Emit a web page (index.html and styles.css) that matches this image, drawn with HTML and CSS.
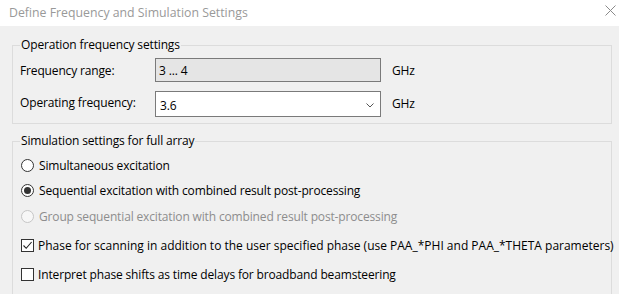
FILE: index.html
```html
<!DOCTYPE html>
<html>
<head>
<meta charset="utf-8">
<link rel="stylesheet" href="styles.css">
</head>
<body>
<div class="window">
  <div class="titlebar">
    <span class="title">Define Frequency and Simulation Settings</span>
    <svg class="close" width="11" height="11" viewBox="0 0 11 11"><path d="M0.5 0.5 L10.5 10.5 M10.5 0.5 L0.5 10.5" stroke="#8a8a8a" stroke-width="1" fill="none"/></svg>
  </div>
  <div class="content">
    <fieldset class="group group-freq">
      <legend>Operation frequency settings</legend>
      <div class="row row-range">
        <span class="label">Frequency range:</span>
        <div class="field field-disabled">3 ... 4</div>
        <span class="unit">GHz</span>
      </div>
      <div class="row row-op">
        <span class="label">Operating frequency:</span>
        <div class="field field-combo">
          <span>3.6</span>
          <svg class="chev" width="8" height="5" viewBox="0 0 8 5"><path d="M0.5 0.5 L4 4 L7.5 0.5" stroke="#555" stroke-width="1" fill="none"/></svg>
        </div>
        <span class="unit">GHz</span>
      </div>
    </fieldset>
    <fieldset class="group group-sim">
      <legend>Simulation settings for full array</legend>
      <div class="opt opt-1"><span class="radio"></span><span>Simultaneous excitation</span></div>
      <div class="opt opt-2"><span class="radio checked"></span><span>Sequential excitation with combined result post-processing</span></div>
      <div class="opt opt-3 disabled"><span class="radio"></span><span>Group sequential excitation with combined result post-processing</span></div>
      <div class="opt opt-4"><span class="check"><svg width="11" height="11" viewBox="0 0 11 11"><path d="M1.5 5.5 L4.2 8.3 L9.6 2" stroke="#222" stroke-width="1.1" fill="none"/></svg></span><span class="wide">Phase for scanning in addition to the user specified phase (use PAA_*PHI and PAA_*THETA parameters)</span></div>
      <div class="opt opt-5"><span class="check"></span><span>Interpret phase shifts as time delays for broadband beamsteering</span></div>
    </fieldset>
  </div>
</div>
</body>
</html>
```
FILE: styles.css
```css
html, body {
  margin: 0;
  padding: 0;
  background: #f0f0f0;
}
body {
  font-family: "Open Sans", "Noto Sans", sans-serif;
  font-size: 12px;
  letter-spacing: -0.15px;
  color: #000;
  width: 619px;
  height: 294px;
  overflow: hidden;
}
.window {
  display: flex;
  flex-direction: column;
  height: 294px;
  overflow: hidden;
}
.titlebar {
  height: 26px;
  background: #fff;
  display: flex;
  align-items: center;
  justify-content: space-between;
  padding: 0 3px 0 9px;
  flex: none;
}
.title {
  color: #999;
  font-size: 12.3px;
  letter-spacing: 0;
  margin-top: -2px;
}
.close {
  margin-top: -6px;
}
.content {
  padding: 0 7px 0 12px;
  flex: 1;
  min-height: 0;
  overflow: hidden;
}
.group {
  border: 1px solid #dcdcdc;
  margin: 0;
  padding: 0 7px 0 7px;
  min-width: 0;
}
.group legend {
  padding: 0 1px;
  line-height: 16px;
  height: 16px;
}
.group-freq {
  margin-top: 11px;
  padding-bottom: 6px;
}
.row {
  display: flex;
  align-items: center;
}
.label {
  width: 135px;
  flex: none;
}
.row-range {
  margin-top: 5px;
}
.row-range .label {
  margin-top: 1px;
}
.row-op {
  margin-top: 9px;
}
.row-op .label {
  margin-top: -4px;
}
.row-op .unit {
  margin-top: -2px;
}
.field {
  width: 226px;
  box-sizing: border-box;
  border: 1px solid #7a7a7a;
  display: flex;
  align-items: center;
  padding-left: 3px;
  flex: none;
}
.field-disabled {
  height: 24px;
  background: #e5e5e5;
}
.field-combo {
  height: 26px;
  background: #fff;
  padding-left: 4px;
  padding-top: 2px;
  justify-content: space-between;
  padding-right: 6px;
}
.unit {
  margin-left: 11px;
}
.group-sim {
  margin-top: 9px;
  height: 170px;
}
.opt {
  display: flex;
  align-items: center;
  height: 20px;
  padding-left: 1px;
  white-space: nowrap;
}
.opt-1 { margin-top: 6px; }
.opt-2 { margin-top: 5px; }
.opt-3 { margin-top: 6px; }
.opt-4 { margin-top: 9px; }
.opt-5 { margin-top: 9px; }
.wide {
  letter-spacing: 0;
}
.disabled {
  color: #8d8d8d;
}
.radio {
  width: 13px;
  height: 13px;
  box-sizing: border-box;
  border: 1px solid #333;
  border-radius: 50%;
  background: #fff;
  margin-right: 5px;
  display: flex;
  align-items: center;
  justify-content: center;
  flex: none;
}
.radio.checked::after {
  content: "";
  width: 7px;
  height: 7px;
  border-radius: 50%;
  background: #333;
}
.disabled .radio {
  border-color: #c6c6c6;
  background: #f7f7f7;
}
.check {
  width: 13px;
  height: 13px;
  box-sizing: border-box;
  border: 1px solid #333;
  background: #fff;
  margin-right: 4px;
  display: flex;
  align-items: center;
  justify-content: center;
  flex: none;
}
```
